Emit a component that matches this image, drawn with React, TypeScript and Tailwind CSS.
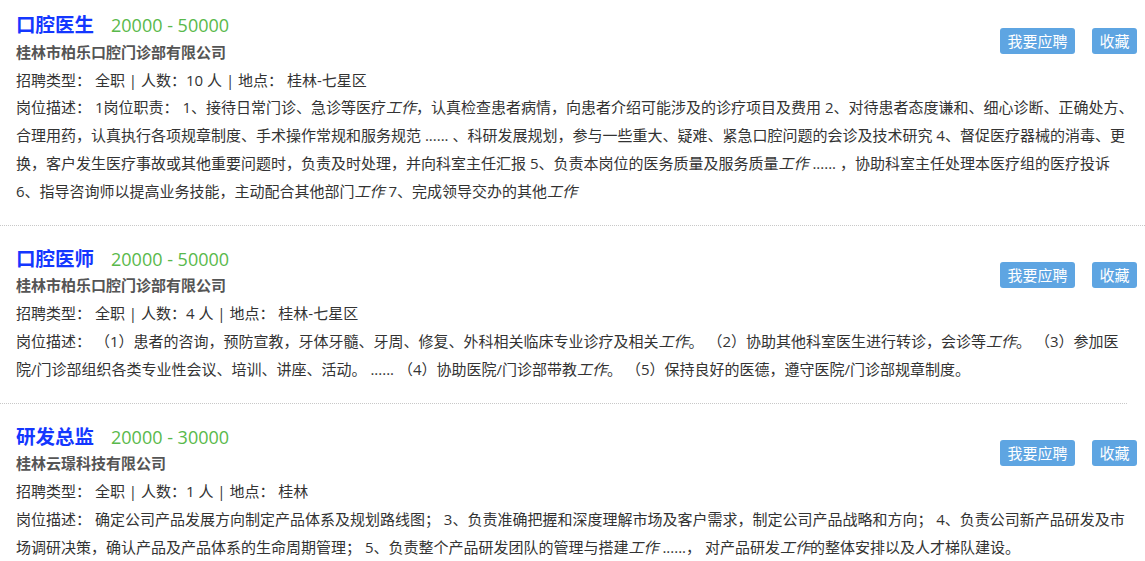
import type { ReactNode } from 'react'

interface Job {
  title: string
  salary: string
  company: string
  count: number
  place: string
  desc: ReactNode
}

const W = () => <em className="italic">工作</em>

const jobs: Job[] = [
  {
    title: '口腔医生',
    salary: '20000 - 50000',
    company: '桂林市柏乐口腔门诊部有限公司',
    count: 10,
    place: '桂林-七星区',
    desc: (
      <>
        1岗位职责： 1、接待日常门诊、急诊等医疗<W />，认真检查患者病情，向患者介绍可能涉及的诊疗项目及费用 2、对待患者态度谦和、细心诊断、正确处方、合理用药，认真执行各项规章制度、手术操作常规和服务规范 ...... 、科研发展规划，参与一些重大、疑难、紧急口腔问题的会诊及技术研究 4、督促医疗器械的消毒、更换，客户发生医疗事故或其他重要问题时，负责及时处理，并向科室主任汇报 5、负责本岗位的医务质量及服务质量<W /> ...... ，协助科室主任处理本医疗组的医疗投诉 6、指导咨询师以提高业务技能，主动配合其他部门<W /> 7、完成领导交办的其他<W />
      </>
    ),
  },
  {
    title: '口腔医师',
    salary: '20000 - 50000',
    company: '桂林市柏乐口腔门诊部有限公司',
    count: 4,
    place: '桂林-七星区',
    desc: (
      <>
        {' '}（1）患者的咨询，预防宣教，牙体牙髓、牙周、修复、外科相关临床专业诊疗及相关<W />。 （2）协助其他科室医生进行转诊，会诊等<W />。 （3）参加医院/门诊部组织各类专业性会议、培训、讲座、活动。 ...... （4）协助医院/门诊部带教<W />。 （5）保持良好的医德，遵守医院/门诊部规章制度。
      </>
    ),
  },
  {
    title: '研发总监',
    salary: '20000 - 30000',
    company: '桂林云璟科技有限公司',
    count: 1,
    place: '桂林',
    desc: (
      <>
        确定公司产品发展方向制定产品体系及规划路线图； 3、负责准确把握和深度理解市场及客户需求，制定公司产品战略和方向； 4、负责公司新产品研发及市场调研决策，确认产品及产品体系的生命周期管理； 5、负责整个产品研发团队的管理与搭建<W /> ......， 对产品研发<W />的整体安排以及人才梯队建设。
      </>
    ),
  },
]

function JobItem({ job, first }: { job: Job; first: boolean }) {
  return (
    <div className={`pl-4 pr-[9px] ${first ? 'pt-[11px]' : 'pt-[19px]'} pb-[19px] leading-[27.8px]`}>
      <div className="float-right mt-[17px] mr-[-1px] flex gap-[17px]">
        <button className="h-[26px] px-[7.5px] rounded-[3px] bg-[#5ea5e2] text-white text-[15px] leading-[26px]">
          我要应聘
        </button>
        <button className="h-[26px] px-[7.5px] rounded-[3px] bg-[#5ea5e2] text-white text-[15px] leading-[26px]">
          收藏
        </button>
      </div>
      <div className="flex items-baseline h-[27.8px]">
        <span className="text-[19.5px] font-bold text-[#1437ff]">{job.title}</span>
        <span className="ml-[17px] text-[18px] text-[#59b94b]">{job.salary}</span>
      </div>
      <div className="text-[15px] font-bold text-[#555]">{job.company}</div>
      <div className="text-[15px] text-[#333]">
        招聘类型： 全职 | 人数：{job.count} 人 | 地点： {job.place}
      </div>
      <div className="text-[15px] text-[#333]">
        岗位描述： {job.desc}
      </div>
    </div>
  )
}

export default function App() {
  return (
    <div className="w-[1145px] bg-white font-['Open_Sans','Noto_Sans_CJK_SC',sans-serif]">
      {jobs.map((job, i) => (
        <div key={i}>
          <JobItem job={job} first={i === 0} />
          {i < jobs.length - 1 && (
            <div className={`border-t border-dotted border-[#c8c8c8] ${i === 1 ? 'mr-[18px]' : ''}`} />
          )}
        </div>
      ))}
    </div>
  )
}
